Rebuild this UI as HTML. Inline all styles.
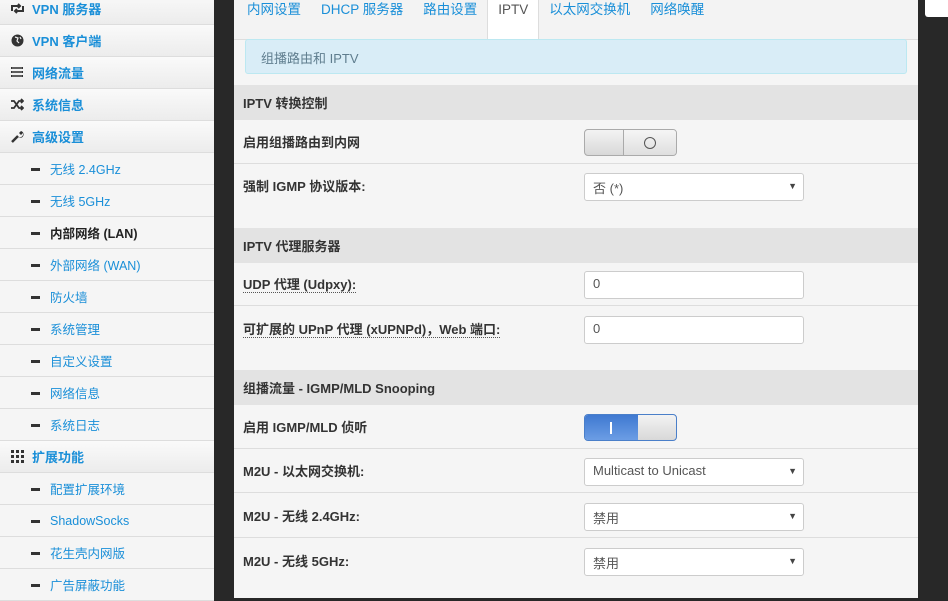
<!DOCTYPE html>
<html><head><meta charset="utf-8"><style>
*{box-sizing:border-box;margin:0;padding:0}
body{width:948px;height:598px;overflow:hidden;background:#282828;font-family:"Liberation Sans","Noto Sans CJK SC",sans-serif;font-size:13px;position:relative}
#side{position:absolute;left:0;top:-7px;width:214px;background:#f3f3f3}
.it{height:32px;border-bottom:1px solid #ddd;display:flex;align-items:center;color:#1a8fd8;position:relative}
.top{background:linear-gradient(#fafafa,#ececec);font-weight:bold;padding-left:32px}
.top .ic{position:absolute;left:11px;top:9px;width:13px;height:13px}
.sub{background:#f5f5f5;padding-left:50px;font-size:12.5px}
.sub:before{content:"";position:absolute;left:31px;top:15px;width:9px;height:3px;background:#333}
.act{color:#222;font-weight:bold}
#main{position:absolute;left:234px;top:0;width:684px;height:598px;background:#f5f5f5}
.tabs{height:40px;border-bottom:1px solid #ddd;display:flex;padding-left:3px;background:#f3f3f3}
.tab{padding:0 10px;line-height:20px;color:#1a8fd8;font-size:13.5px;height:39px}
.tab.on{background:#fff;border:1px solid #ddd;border-top:0;border-bottom:0;color:#555;height:40px}
.alert{position:absolute;left:11px;top:39px;width:662px;height:35px;background:#d9edf7;border:1px solid #bce8f1;border-radius:3px;color:#5f7d8e;padding:8px 15px;font-size:13px}
.hd{position:absolute;left:0;width:684px;height:35px;background:#e3e3e3;font-weight:bold;color:#333;padding:8px 9px}
.row{position:absolute;left:0;width:684px;height:44px;border-bottom:1px solid #ddd;font-weight:bold;color:#333;padding:12px 9px}
.row .l{border-bottom:1px dotted #555}
.ctl{position:absolute;left:350px;top:9px;width:220px;height:28px;background:#fff;border:1px solid #ccc;border-radius:3px;font-weight:normal;color:#555;padding:4px 8px}
.sel:after{content:"▼";position:absolute;right:6px;top:7px;font-size:9px;color:#444}
.sw{position:absolute;left:350px;top:9px;width:93px;height:27px;border:1px solid #aaa;border-radius:4px;overflow:hidden;background:linear-gradient(#f3f3f3,#d8d8d8)}
</style></head><body>
<div id="side">
<div class="it top"><svg class="ic" viewBox="0 0 13 13"><path d="M1 9V4h8M7 2l2 2-2 2M12 4v5H4M6 11l-2-2 2-2" fill="none" stroke="#333" stroke-width="2"/></svg>VPN 服务器</div>
<div class="it top"><svg class="ic" viewBox="0 0 13 13"><circle cx="6.5" cy="6.5" r="6" fill="#333"/><path d="M4 3l3 1-1 3 2 2M9 3l1 2" stroke="#eee" stroke-width="1.2" fill="none"/></svg>VPN 客户端</div>
<div class="it top"><svg class="ic" viewBox="0 0 13 13"><path d="M0 2h12M0 6h12M0 10h12" stroke="#333" stroke-width="2" fill="none"/><path d="M1 2h10M1 6h10M1 10h10" stroke="#ddd" stroke-width="0.6"/></svg>网络流量</div>
<div class="it top"><svg class="ic" viewBox="0 0 13 13"><path d="M0 3h3l5 7h3M0 10h3l5-7h3M10 1l2 2-2 2M10 8l2 2-2 2" stroke="#333" stroke-width="1.8" fill="none"/></svg>系统信息</div>
<div class="it top"><svg class="ic" viewBox="0 0 13 13"><path d="M1 12l6-6" stroke="#333" stroke-width="2.5"/><path d="M6 6a3.5 3.5 0 1 0 4-5l-2 2 1 1 1 1 2-2a3.5 3.5 0 0 1-5 4" fill="#333"/></svg>高级设置</div>
<div class="it sub">无线 2.4GHz</div>
<div class="it sub">无线 5GHz</div>
<div class="it sub act">内部网络 (LAN)</div>
<div class="it sub">外部网络 (WAN)</div>
<div class="it sub">防火墙</div>
<div class="it sub">系统管理</div>
<div class="it sub">自定义设置</div>
<div class="it sub">网络信息</div>
<div class="it sub">系统日志</div>
<div class="it top"><svg class="ic" viewBox="0 0 13 13" fill="#333"><rect x="0" y="0" width="3" height="3"/><rect x="5" y="0" width="3" height="3"/><rect x="10" y="0" width="3" height="3"/><rect x="0" y="5" width="3" height="3"/><rect x="5" y="5" width="3" height="3"/><rect x="10" y="5" width="3" height="3"/><rect x="0" y="10" width="3" height="3"/><rect x="5" y="10" width="3" height="3"/><rect x="10" y="10" width="3" height="3"/></svg>扩展功能</div>
<div class="it sub">配置扩展环境</div>
<div class="it sub">ShadowSocks</div>
<div class="it sub">花生壳内网版</div>
<div class="it sub">广告屏蔽功能</div>
</div>
<div style="position:absolute;left:925px;top:0;width:23px;height:17px;background:#fff;border-radius:0 0 0 3px"></div>
<div id="main">
<div class="tabs"><div class="tab">内网设置</div><div class="tab">DHCP 服务器</div><div class="tab">路由设置</div><div class="tab on">IPTV</div><div class="tab">以太网交换机</div><div class="tab">网络唤醒</div></div>
<div class="alert">组播路由和 IPTV</div>
<div class="hd" style="top:85px">IPTV 转换控制</div>
<div class="row" style="top:120px">启用组播路由到内网<div class="sw"><div style="position:absolute;left:38px;top:0;width:55px;height:27px;border-left:1px solid #aaa;background:linear-gradient(#f5f5f5,#ddd)"><div style="position:absolute;left:20px;top:7px;width:12px;height:12px;border:1.5px solid #555;border-radius:50%"></div></div></div></div>
<div class="row" style="top:164px;border:0">强制 IGMP 协议版本:<div class="ctl sel">否 (*)</div></div>
<div class="hd" style="top:228px">IPTV 代理服务器</div>
<div class="row" style="top:262px"><span class="l">UDP 代理 (Udpxy):</span><div class="ctl">0</div></div>
<div class="row" style="top:307px;border:0"><span class="l">可扩展的 UPnP 代理 (xUPNPd)，Web 端口:</span><div class="ctl">0</div></div>
<div class="hd" style="top:370px">组播流量 - IGMP/MLD Snooping</div>
<div class="row" style="top:405px">启用 IGMP/MLD 侦听<div class="sw" style="border-color:#4a7fc9"><div style="position:absolute;left:0;top:0;width:53px;height:27px;background:linear-gradient(#3f79d1,#6fa0e6)"><div style="position:absolute;left:25px;top:7px;width:2px;height:12px;background:#fff"></div></div></div></div>
<div class="row" style="top:449px">M2U - 以太网交换机:<div class="ctl sel">Multicast to Unicast</div></div>
<div class="row" style="top:494px">M2U - 无线 2.4GHz:<div class="ctl sel">禁用</div></div>
<div class="row" style="top:539px;border:0">M2U - 无线 5GHz:<div class="ctl sel">禁用</div></div>
</div>
</body></html>
